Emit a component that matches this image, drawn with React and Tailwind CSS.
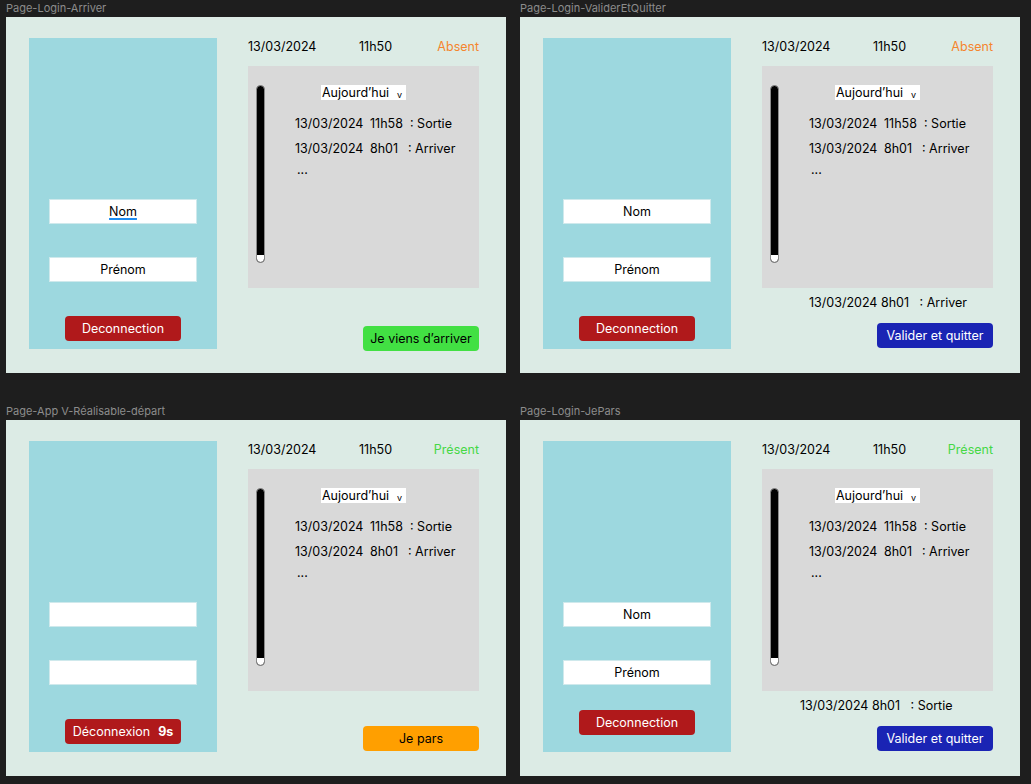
import React from 'react'

const font = { fontFamily: 'Inter, "Noto Sans", sans-serif' }

function Scrollbar() {
  return (
    <div className="w-[9px] h-[178px] rounded-full border border-[#8a8a8a] bg-black flex flex-col justify-end overflow-hidden shrink-0">
      <div className="h-[7px] bg-white rounded-b-full" />
    </div>
  )
}

function HistoryPanel() {
  return (
    <div className="w-[231px] h-[222px] bg-[#d9d9d9] flex pt-[19px] pl-[8px]">
      <Scrollbar />
      <div className="ml-[30px] w-[184px] shrink-0 flex flex-col text-[12.5px] leading-[16px] text-black">
        <div className="ml-[26px] w-[85px] h-[15px] bg-white flex items-center justify-between pl-[1px] pr-[4px] leading-[15px]">
          <span>Aujourd’hui</span>
          <span className="text-[9px] leading-none mt-[4px]">v</span>
        </div>
        <div className="flex mt-[16px]">
          <span className="w-[75px] shrink-0">13/03/2024</span>
          <span className="w-[40px] shrink-0">11h58</span>
          <span>: Sortie</span>
        </div>
        <div className="flex mt-[9px]">
          <span className="w-[75px] shrink-0">13/03/2024</span>
          <span className="w-[38px] shrink-0">8h01</span>
          <span>: Arriver</span>
        </div>
        <div className="mt-[5px] pl-[2px]">...</div>
      </div>
    </div>
  )
}

function Field({ label, underline }) {
  return (
    <div className="w-[148px] h-[25px] bg-white border border-[#cfe9ec] flex items-center justify-center pt-[1px] text-[12.5px] text-black">
      {label && (
        <span className={underline ? 'underline decoration-[#1d8cf0] decoration-2 underline-offset-2' : ''}>{label}</span>
      )}
    </div>
  )
}

function Frame({ title, status, statusColor, showLabels, underline, logout, logoutTop, firstTop, note, noteLeft, action, actionCls, actionTop }) {
  return (
    <div className="flex flex-col">
      <div className="h-[17px] leading-[17px] text-[11px] text-[#8c8c8c]">{title}</div>
      <div className="w-[500px] h-[356px] bg-[#dcebe5] flex pt-[21px] pl-[23px]">
        {/* Left panel */}
        <div className="w-[188px] h-[311px] bg-[#9dd8df] flex flex-col items-center" style={{ paddingTop: firstTop }}>
          <Field label={showLabels ? 'Nom' : ''} underline={underline} />
          <div className="mt-[33px]">
            <Field label={showLabels ? 'Prénom' : ''} />
          </div>
          <button className="w-[116px] h-[25px] rounded-[4px] bg-[#b0191b] text-white text-[12.5px] pt-[1px] flex items-center justify-center gap-[8px]" style={{ marginTop: logoutTop }}>
            {logout}
          </button>
        </div>

        {/* Right column */}
        <div className="ml-[31px] w-[231px] flex flex-col">
          <div className="mt-[1px] h-[16px] flex items-center text-[12.5px] leading-[16px] text-black">
            <span className="w-[111px] shrink-0">13/03/2024</span>
            <span>11h50</span>
            <span className="ml-auto" style={{ color: statusColor }}>{status}</span>
          </div>
          <div className="mt-[11px]">
            <HistoryPanel />
          </div>
          {note && (
            <div className="mt-[7px] h-[16px] text-[12.5px] leading-[16px] text-black whitespace-pre" style={{ paddingLeft: noteLeft }}>
              {note}
            </div>
          )}
          <div className="flex justify-end" style={{ marginTop: actionTop }}>
            <button className={`w-[116px] h-[25px] rounded-[4px] text-[12.5px] pt-[1px] flex items-center justify-center ${actionCls}`}>
              {action}
            </button>
          </div>
        </div>
      </div>
    </div>
  )
}

export default function App() {
  return (
    <div className="w-[1031px] h-[784px] bg-[#1e1e1e] pl-[6px] overflow-hidden" style={font}>
      <div className="grid grid-cols-[500px_500px] gap-x-[14px] gap-y-[30px]">
        <Frame
          title="Page-Login-Arriver"
          status="Absent"
          statusColor="#f5852e"
          showLabels
          underline
          firstTop={161}
          logout="Deconnection"
          logoutTop={34}
          action="Je viens d’arriver"
          actionCls="bg-[#42e043] text-black"
          actionTop={38}
        />
        <Frame
          title="Page-Login-ValiderEtQuitter"
          status="Absent"
          statusColor="#f5852e"
          showLabels
          firstTop={161}
          logout="Deconnection"
          logoutTop={34}
          note="13/03/2024 8h01   : Arriver"
          noteLeft={47}
          action="Valider et quitter"
          actionCls="bg-[#1a24b4] text-white"
          actionTop={12}
        />
        <Frame
          title="Page-App V-Réalisable-départ"
          status="Présent"
          statusColor="#45d845"
          showLabels={false}
          firstTop={161}
          logout={<><span>Déconnexion</span><span className="font-bold">9s</span></>}
          logoutTop={34}
          action="Je pars"
          actionCls="bg-[#ff9f00] text-black"
          actionTop={35}
        />
        <Frame
          title="Page-Login-JePars"
          status="Présent"
          statusColor="#45d845"
          showLabels
          firstTop={161}
          logout="Deconnection"
          logoutTop={25}
          note="13/03/2024 8h01   : Sortie"
          noteLeft={38}
          action="Valider et quitter"
          actionCls="bg-[#1a24b4] text-white"
          actionTop={12}
        />
      </div>
    </div>
  )
}
